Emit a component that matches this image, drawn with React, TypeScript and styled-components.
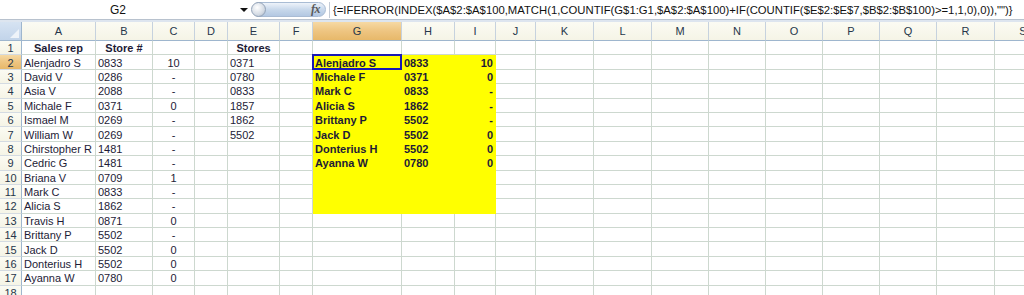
import React from "react";
import styled, { createGlobalStyle, css } from "styled-components";

const GlobalStyle = createGlobalStyle`
  html, body { margin: 0; padding: 0; background: #ffffff; }
  body {
    width: 1024px;
    height: 295px;
    overflow: hidden;
    font-family: "Liberation Sans", Arial, sans-serif;
  }
`;

const Window = styled.div`
  width: 1024px;
  height: 295px;
  overflow: hidden;
  display: flex;
  flex-direction: column;
  background: #ffffff;
`;

const FormulaBar = styled.div`
  flex: none;
  height: 20px;
  box-sizing: border-box;
  border-bottom: 1px solid #b8c2ce;
  display: flex;
  align-items: center;
  background: #ffffff;
`;

const NameBox = styled.div`
  width: 236px;
  height: 100%;
  display: flex;
  align-items: center;
  justify-content: center;
  font-size: 12px;
  color: #111111;
`;

const DropArrow = styled.span`
  width: 0;
  height: 0;
  margin-left: 4px;
  border-left: 4px solid transparent;
  border-right: 4px solid transparent;
  border-top: 4px solid #111111;
`;

const FxButton = styled.div`
  margin-left: 4px;
  width: 74px;
  height: 15px;
  box-sizing: border-box;
  border-radius: 8px;
  border: 1px solid #a9bcd4;
  background: linear-gradient(#eef3fa, #c5d6ea 55%, #b3c8e2);
  display: flex;
  align-items: center;
  justify-content: space-between;
  position: relative;
`;

const FxKnob = styled.span`
  width: 15px;
  height: 15px;
  margin-left: -2px;
  box-sizing: border-box;
  border-radius: 50%;
  border: 1px solid #93a3b8;
  background: radial-gradient(circle at 40% 35%, #ffffff, #d4dbe4 60%, #a9b6c6);
`;

const FxLabel = styled.span`
  font-family: "Liberation Serif", "Times New Roman", serif;
  font-style: italic;
  font-weight: bold;
  font-size: 12px;
  color: #5a5a5a;
  margin-right: 5px;
  letter-spacing: -0.5px;
`;

const Divider = styled.span`
  width: 1px;
  height: 16px;
  margin-left: 3px;
  background: #c3cbd6;
`;

const FormulaText = styled.div`
  margin-left: 3px;
  font-size: 11.3px;
  color: #111111;
  white-space: nowrap;
`;

const Band = styled.div`
  flex: none;
  height: 2px;
  background: #dde5ef;
`;

const Sheet = styled.div`
  display: grid;
  grid-template-columns: 22px 74px 57px 42px 33px 52px 33px 89px 53px 41px 40px 58px 58px 57px 57px 57px 57px 57px 58px 57px;
  grid-template-rows: 19px repeat(18, 14.4px);
  width: max-content;
  font-size: 11px;
`;

const headerBase = css<{ $active?: boolean }>`
  box-sizing: border-box;
  display: flex;
  align-items: center;
  justify-content: center;
  color: #26364a;
  font-size: 11px;
  background: ${(p) =>
    p.$active
      ? "linear-gradient(#f6d9a4, #eec581 50%, #e7b86a)"
      : "linear-gradient(#fbfbf3, #f5f4e6)"};
`;

const Corner = styled.div`
  box-sizing: border-box;
  position: relative;
  background: linear-gradient(#d6e3f2, #c2d4ea);
  border-right: 1px solid #9eb6ce;
  border-bottom: 1px solid #9eb6ce;
  &::after {
    content: "";
    position: absolute;
    right: 2px;
    bottom: 2px;
    width: 0;
    height: 0;
    border-left: 9px solid transparent;
    border-bottom: 9px solid #eef3f9;
  }
`;

const ColHeader = styled.div<{ $active?: boolean }>`
  ${headerBase};
  border-right: 1px solid #c6d2de;
  border-bottom: 1px solid #9eb6ce;
`;

const RowHeader = styled.div<{ $active?: boolean }>`
  ${headerBase};
  border-right: 1px solid #9eb6ce;
  border-bottom: 1px solid #d4dbe2;
  padding-top: 1px;
`;

type Align = "left" | "center" | "right";

const Cell = styled.div<{ $align?: Align; $bold?: boolean; $fill?: boolean; $selected?: boolean }>`
  box-sizing: border-box;
  position: relative;
  display: flex;
  align-items: center;
  justify-content: ${(p) =>
    p.$align === "center" ? "center" : p.$align === "right" ? "flex-end" : "flex-start"};
  padding: 1px 2px 0 2px;
  white-space: nowrap;
  overflow: visible;
  color: #1d1b36;
  font-size: 11px;
  font-weight: ${(p) => (p.$bold ? "bold" : "normal")};
  background: ${(p) => (p.$fill ? "#ffff00" : "#ffffff")};
  border-right: 1px solid ${(p) => (p.$fill ? "#ffff00" : "#cdd8cf")};
  border-bottom: 1px solid ${(p) => (p.$fill ? "#ffff00" : "#cdd8cf")};
  ${(p) =>
    p.$selected &&
    css`
      &::after {
        content: "";
        position: absolute;
        left: -1px;
        top: -1px;
        right: -1px;
        bottom: -1px;
        border: 2px solid #1a1ab4;
        pointer-events: none;
      }
    `}
`;

const COLS = ["A", "B", "C", "D", "E", "F", "G", "H", "I", "J", "K", "L", "M", "N", "O", "P", "Q", "R", "S"];

type Row = Record<string, string>;

const ROWS: Row[] = [
  { A: "Sales rep", B: "Store #", E: "Stores" },
  { A: "Alenjadro S", B: "0833", C: "10", E: "0371", G: "Alenjadro S", H: "0833", I: "10" },
  { A: "David V", B: "0286", C: "-", E: "0780", G: "Michale F", H: "0371", I: "0" },
  { A: "Asia V", B: "2088", C: "-", E: "0833", G: "Mark C", H: "0833", I: "-" },
  { A: "Michale F", B: "0371", C: "0", E: "1857", G: "Alicia S", H: "1862", I: "-" },
  { A: "Ismael M", B: "0269", C: "-", E: "1862", G: "Brittany P", H: "5502", I: "-" },
  { A: "William W", B: "0269", C: "-", E: "5502", G: "Jack D", H: "5502", I: "0" },
  { A: "Chirstopher R", B: "1481", C: "-", G: "Donterius H", H: "5502", I: "0" },
  { A: "Cedric G", B: "1481", C: "-", G: "Ayanna W", H: "0780", I: "0" },
  { A: "Briana V", B: "0709", C: "1" },
  { A: "Mark C", B: "0833", C: "-" },
  { A: "Alicia S", B: "1862", C: "-" },
  { A: "Travis H", B: "0871", C: "0" },
  { A: "Brittany P", B: "5502", C: "-" },
  { A: "Jack D", B: "5502", C: "0" },
  { A: "Donterius H", B: "5502", C: "0" },
  { A: "Ayanna W", B: "0780", C: "0" },
  {},
];

const FORMULA =
  '{=IFERROR(INDEX($A$2:$A$100,MATCH(1,COUNTIF(G$1:G1,$A$2:$A$100)+IF(COUNTIF($E$2:$E$7,$B$2:$B$100)>=1,1,0),0)),"")}';

function alignFor(col: string, rowNum: number): Align {
  if (rowNum === 1) return "center";
  if (col === "C") return "center";
  if (col === "I") return "right";
  return "left";
}

export default function App() {
  return (
    <>
      <GlobalStyle />
      <Window>
        <FormulaBar>
          <NameBox>G2</NameBox>
          <DropArrow />
          <FxButton>
            <FxKnob />
            <FxLabel>fx</FxLabel>
          </FxButton>
          <Divider />
          <FormulaText>{FORMULA}</FormulaText>
        </FormulaBar>
        <Band />
        <Sheet>
          <Corner />
          {COLS.map((c) => (
            <ColHeader key={c} $active={c === "G"}>
              {c}
            </ColHeader>
          ))}
          {ROWS.map((row, i) => {
            const rowNum = i + 1;
            return (
              <React.Fragment key={rowNum}>
                <RowHeader $active={rowNum === 2}>{rowNum}</RowHeader>
                {COLS.map((c) => {
                  const inFill = rowNum >= 2 && rowNum <= 12 && (c === "G" || c === "H" || c === "I");
                  return (
                    <Cell
                      key={c}
                      $align={alignFor(c, rowNum)}
                      $bold={rowNum === 1 || inFill}
                      $fill={inFill}
                      $selected={rowNum === 2 && c === "G"}
                    >
                      {row[c] ?? ""}
                    </Cell>
                  );
                })}
              </React.Fragment>
            );
          })}
        </Sheet>
      </Window>
    </>
  );
}
